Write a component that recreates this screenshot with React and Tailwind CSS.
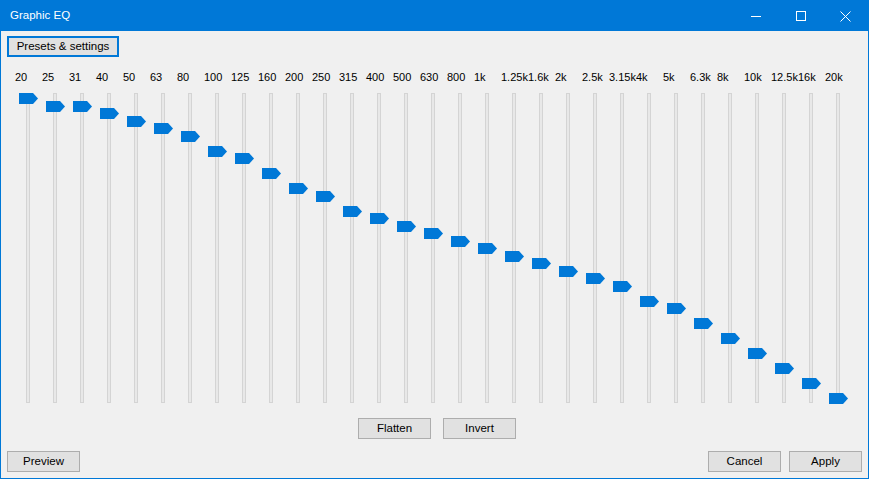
const BANDS = [
  ["20", 93], ["25", 101], ["31", 101], ["40", 108], ["50", 116], ["63", 123],
  ["80", 131], ["100", 146], ["125", 153], ["160", 168], ["200", 183], ["250", 191],
  ["315", 206], ["400", 213], ["500", 221], ["630", 228], ["800", 236], ["1k", 243],
  ["1.25k", 251], ["1.6k", 258], ["2k", 266], ["2.5k", 273], ["3.15k", 281], ["4k", 296],
  ["5k", 303], ["6.3k", 318], ["8k", 333], ["10k", 348], ["12.5k", 363], ["16k", 378],
  ["20k", 393],
];

const TRACK_TOP = 93;

function Thumb({ top }) {
  return (
    <svg
      width="19"
      height="11"
      viewBox="0 0 19 11"
      className="absolute left-[-8px]"
      style={{ top: top - TRACK_TOP - 1 }}
    >
      <polygon points="0,0 14,0 19,5.5 14,11 0,11" fill="#0078d7" />
    </svg>
  );
}

function Band({ label, top }) {
  return (
    <div className="w-[27px] shrink-0 flex flex-col">
      <div className="h-[16px] leading-[16px] text-[11px] whitespace-nowrap pl-[1px]">{label}</div>
      <div className="mt-[8px] ml-[12px] relative w-[4px] h-[310px] border border-[#d4d4d4] bg-[#e8e8e8]">
        <Thumb top={top} />
      </div>
    </div>
  );
}

function Btn({ children, className }) {
  return (
    <button
      className={
        "h-[21px] w-[73px] border border-[#adadad] bg-[#e1e1e1] text-[11.5px] leading-none text-black flex items-center justify-center " +
        (className || "")
      }
    >
      {children}
    </button>
  );
}

export default function App() {
  return (
    <div
      className="w-[869px] h-[479px] border border-[#0078d7] bg-[#f0f0f0] flex flex-col text-black"
      style={{ fontFamily: '"Liberation Sans", Arial, sans-serif' }}
    >
      {/* title bar */}
      <div className="h-[30px] bg-[#0078d7] flex items-center text-white shrink-0">
        <div className="pl-[9px] text-[11.5px] flex-1">Graphic EQ</div>
        <div className="flex h-full">
          <div className="w-[45px] flex items-center justify-center">
            <svg width="10" height="10" viewBox="0 0 10 10">
              <line x1="0" y1="5.5" x2="10" y2="5.5" stroke="white" strokeWidth="1" />
            </svg>
          </div>
          <div className="w-[45px] flex items-center justify-center">
            <svg width="10" height="10" viewBox="0 0 10 10">
              <rect x="0.5" y="0.5" width="9" height="9" fill="none" stroke="white" strokeWidth="1" />
            </svg>
          </div>
          <div className="w-[45px] flex items-center justify-center">
            <svg width="11" height="11" viewBox="0 0 11 11">
              <path d="M0.5 0.5 L10.5 10.5 M10.5 0.5 L0.5 10.5" stroke="white" strokeWidth="1" />
            </svg>
          </div>
        </div>
      </div>

      {/* body */}
      <div className="flex-1 flex flex-col px-[6px]">
        <div className="mt-[5px]">
          <button className="h-[21px] w-[112px] border-2 border-[#0078d7] bg-[#e1e1e1] text-[11.5px] leading-none flex items-center justify-center">
            Presets &amp; settings
          </button>
        </div>

        <div className="mt-[12px] ml-[7px] flex">
          {BANDS.map(([label, top]) => (
            <Band key={label} label={label} top={top} />
          ))}
        </div>

        <div className="mt-[15px] flex justify-center gap-[12px] pl-[5px]">
          <Btn>Flatten</Btn>
          <Btn>Invert</Btn>
        </div>

        <div className="mt-[12px] flex items-center">
          <Btn>Preview</Btn>
          <div className="flex-1" />
          <Btn>Cancel</Btn>
          <Btn className="ml-[8px]">Apply</Btn>
        </div>
      </div>
    </div>
  );
}
